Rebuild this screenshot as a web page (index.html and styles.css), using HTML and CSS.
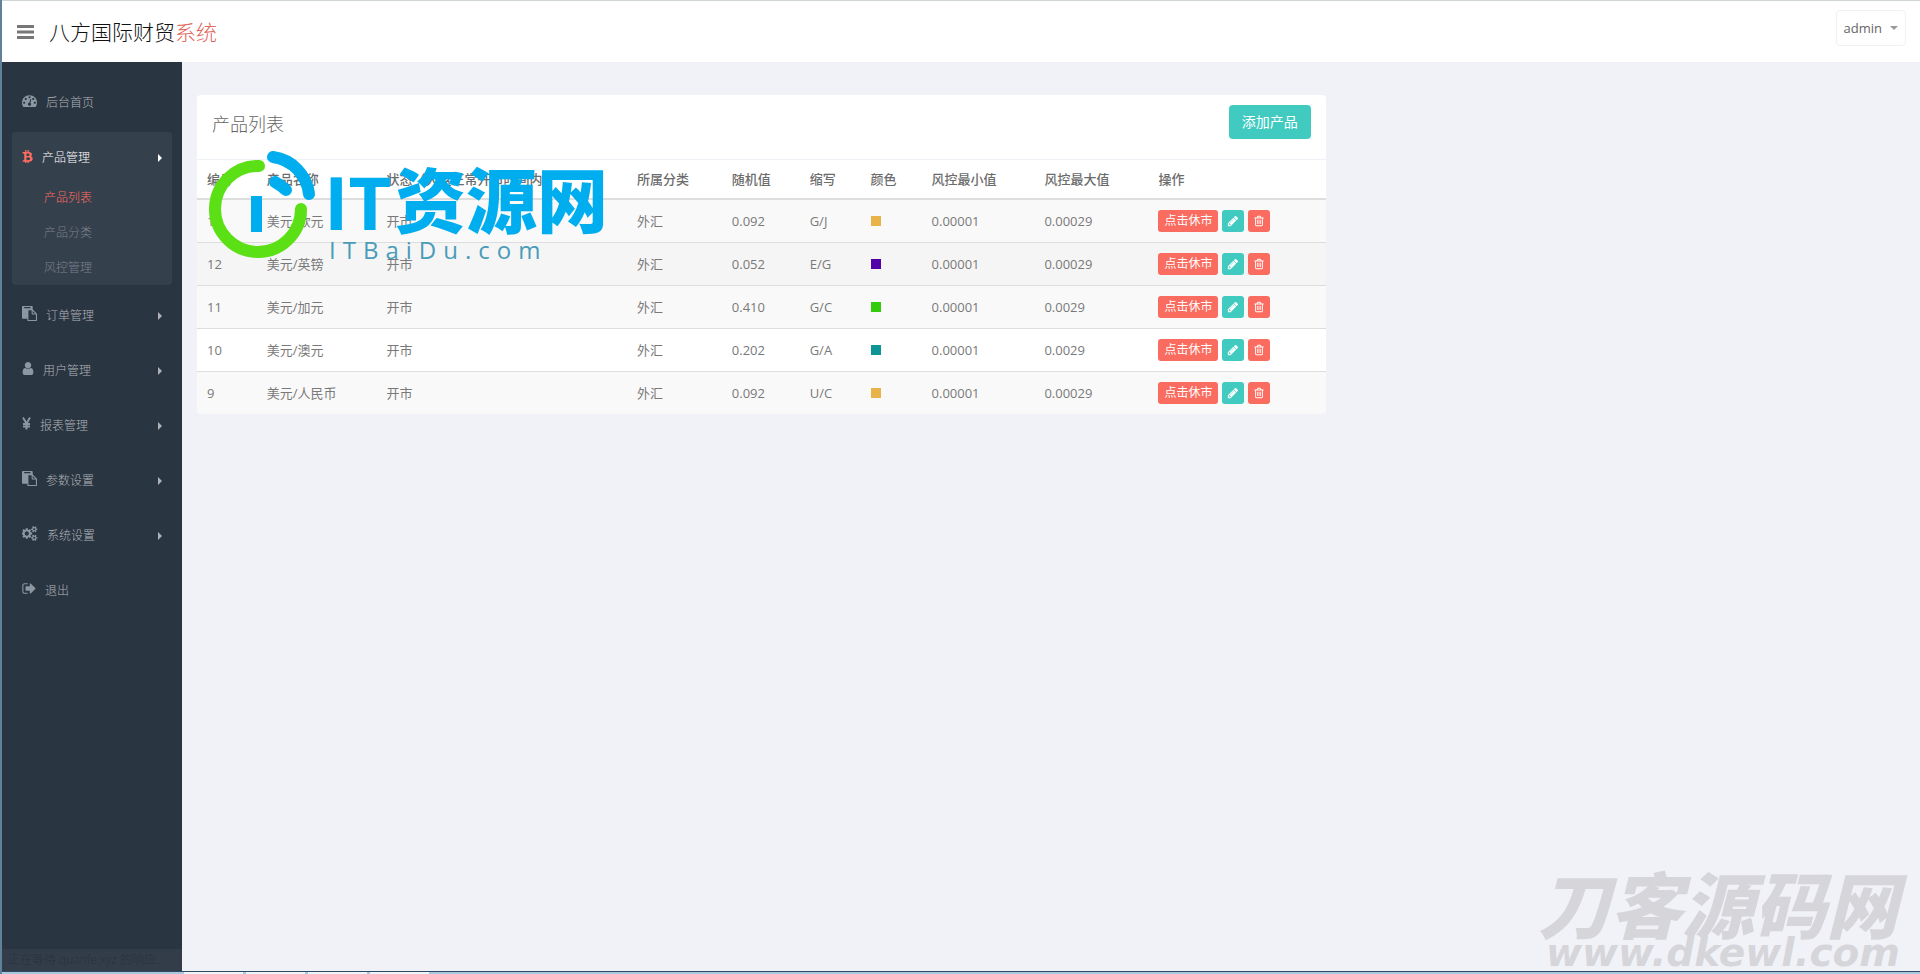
FILE: index.html
```html
<!DOCTYPE html>
<html lang="zh-CN">
<head>
<meta charset="utf-8">
<title>八方国际财贸系统</title>
<link rel="stylesheet" href="styles.css">
</head>
<body>
<svg class="sprite" aria-hidden="true">
  <symbol id="i-dash" viewBox="0 0 1792 1792"><path d="M384 1152q0-53-37.5-90.5t-90.5-37.5-90.5 37.5-37.5 90.5 37.5 90.5 90.5 37.5 90.5-37.5 37.5-90.5zm192-448q0-53-37.5-90.5t-90.5-37.5-90.5 37.5-37.5 90.5 37.5 90.5 90.5 37.5 90.5-37.5 37.5-90.5zm428 481l101-382q6-26-7.5-48.5t-38.5-29.5-48 6.5-30 39.5l-101 382q-60 5-107 43.5t-63 98.5q-20 77 20 146t117 89 146-20 89-117q16-60-6-117t-72-91zm660-33q0-53-37.5-90.5t-90.5-37.5-90.5 37.5-37.5 90.5 37.5 90.5 90.5 37.5 90.5-37.5 37.5-90.5zm-640-640q0-53-37.5-90.5t-90.5-37.5-90.5 37.5-37.5 90.5 37.5 90.5 90.5 37.5 90.5-37.5 37.5-90.5zm448 192q0-53-37.5-90.5t-90.5-37.5-90.5 37.5-37.5 90.5 37.5 90.5 90.5 37.5 90.5-37.5 37.5-90.5zm320 448q0 261-141 483-19 29-54 29h-1402q-35 0-54-29-141-221-141-483 0-182 71-348t191-286 286-191 348-71 348 71 286 191 191 286 71 348z"/></symbol>
  <symbol id="i-btc" viewBox="200 0 1280 1792"><path d="M1365 739q18 182-131 258 117 28 175 103t45 214q-7 71-32.5 125t-64.5 89-97 58.5-121.5 34.5-145.5 15v255h-154v-251q-80 0-122-1v252h-154v-255q-18 0-54-.5t-55-.5h-200l31-183h111q50 0 58-51v-402h16q-6-1-16-1v-287q-13-68-89-68h-111v-164l212 1q64 0 97-1v-252h154v247q82-2 122-2v-245h154v252q79 7 140 22.5t113 45 82.5 78 36.5 114.5zm-215 545q0-36-15-64t-37-46-57.5-30.5-65.5-18.5-74-9-69-3-64.5 1-47.5 1v338q8 0 37 .5t48 .5 53-1.5 58.5-4 57-8.5 55.5-14 47.5-21 39.5-30 24.5-40 9.5-51zm-71-476q0-33-12.5-58.5t-30.5-42-48-28-55-16.5-61.5-8-58-2.5-54 1-39.5.5v307q5 0 34.5.5t46.5 0 50-2 55-5.5 51.5-11 48.5-18.5 37-27 27-38.5 9-51z"/></symbol>
  <symbol id="i-paste" viewBox="0 0 1792 1792"><path d="M768 1664h896v-640h-416q-40 0-68-28t-28-68v-416h-384v1152zm256-1440v-64q0-13-9.5-22.5t-22.5-9.5h-704q-13 0-22.5 9.5t-9.5 22.5v64q0 13 9.5 22.5t22.5 9.5h704q13 0 22.5-9.5t9.5-22.5zm256 672h299l-299-299v299zm512 128v672q0 40-28 68t-68 28h-960q-40 0-68-28t-28-68v-160h-544q-40 0-68-28t-28-68v-1344q0-40 28-68t68-28h1088q40 0 68 28t28 68v328q21 13 36 28l408 408q28 28 48 76t20 88z"/></symbol>
  <symbol id="i-user" viewBox="256 0 1280 1792"><path d="M1536 1399q0 109-62.5 187t-150.5 78h-854q-88 0-150.5-78t-62.5-187q0-85 8.5-160.5t31.5-152 58.5-131 94-89 134.5-34.5q131 128 313 128t313-128q76 0 134.5 34.5t94 89 58.5 131 31.5 152 8.5 160.5zm-256-887q0 159-112.5 271.5t-271.5 112.5-271.5-112.5-112.5-271.5 112.5-271.5 271.5-112.5 271.5 112.5 112.5 271.5z"/></symbol>
  <symbol id="i-yen" viewBox="0 0 9 15"><path d="M1 1.5l3.5 6 3.5-6M4.500 7.500v6M1 8h7M1 10.500h7" fill="none" stroke="currentColor" stroke-width="1.900"/></symbol>
  <symbol id="i-cogs" viewBox="0 0 1920 1792"><path d="M832 896q0-106-75-181t-181-75-181 75-75 181 75 181 181 75 181-75 75-181zm768 512q0-52-38-90t-90-38-90 38-38 90q0 53 37.5 90.5t90.5 37.5 90.5-37.5 37.5-90.5zm0-1024q0-52-38-90t-90-38-90 38-38 90q0 53 37.5 90.5t90.5 37.5 90.5-37.5 37.5-90.5zm-384 421v185q0 10-7 19.5t-16 10.5l-155 24q-11 35-32 76 34 48 90 115 7 11 7 20 0 12-7 19-23 30-82.5 89.5t-78.5 59.5q-11 0-21-7l-115-90q-37 19-77 31-11 108-23 155-7 24-30 24h-186q-11 0-20-7.5t-10-17.5l-23-153q-34-10-75-31l-118 89q-7 7-20 7-11 0-21-8-144-133-144-160 0-9 7-19 10-14 41-53t47-61q-23-44-35-82l-152-24q-10-1-17-9.5t-7-19.500v-185q0-10 7-19.500t16-10.500l155-24q11-35 32-76-34-48-90-115-7-11-7-20 0-12 7-20 22-30 82-89t79-59q11 0 21 7l115 90q34-18 77-32 11-108 23-154 7-24 30-24h186q11 0 20 7.500t10 17.500l23 153q34 10 75 31l118-89q8-7 20-7 11 0 21 8 144 133 144 160 0 8-7 19-12 16-42 54t-45 60q23 48 34 82l152 23q10 2 17 10.500t7 19.500zm640 533v140q0 16-149 31-12 27-30 52 51 113 51 138 0 4-4 7-122 71-124 71-8 0-46-47t-52-68q-20 2-30 2t-30-2q-14 21-52 68t-46 47q-2 0-124-71-4-3-4-7 0-25 51-138-18-25-30-52-149-15-149-31v-140q0-16 149-31 13-29 30-52-51-113-51-138 0-4 4-7 4-2 35-20t59-34 30-16q8 0 46 46.500t52 67.500q20-2 30-2t30 2q51-71 92-112l6-2q4 0 124 70 4 3 4 7 0 25-51 138 17 23 30 52 149 15 149 31zm0-1024v140q0 16-149 31-12 27-30 52 51 113 51 138 0 4-4 7-122 71-124 71-8 0-46-47t-52-68q-20 2-30 2t-30-2q-14 21-52 68t-46 47q-2 0-124-71-4-3-4-7 0-25 51-138-18-25-30-52-149-15-149-31v-140q0-16 149-31 13-29 30-52-51-113-51-138 0-4 4-7 4-2 35-20t59-34 30-16q8 0 46 46.500t52 67.500q20-2 30-2t30 2q51-71 92-112l6-2q4 0 124 70 4 3 4 7 0 25-51 138 17 23 30 52 149 15 149 31z"/></symbol>
  <symbol id="i-out" viewBox="64 0 1600 1792"><path d="M704 1440q0 4 1 20t.5 26.500-3 23.500-10 19.500-20.500 6.500h-320q-119 0-203.500-84.500t-84.500-203.500v-704q0-119 84.500-203.500t203.500-84.500h320q13 0 22.500 9.500t9.500 22.500q0 4 1 20t.5 26.500-3 23.500-10 19.500-20.500 6.500h-320q-66 0-113 47t-47 113v704q0 66 47 113t113 47h312l11.500 1 11.500 3 8 5.500 7 9 2 13.500zm928-544q0 26-19 45l-544 544q-19 19-45 19t-45-19-19-45v-288h-448q-26 0-45-19t-19-45v-384q0-26 19-45t45-19h448v-288q0-26 19-45t45-19 45 19l544 544q19 19 19 45z"/></symbol>
  <symbol id="i-pencil" viewBox="0 0 1792 1792"><path d="M491 1536l91-91-235-235-91 91v107h128v128h107zm523-928q0-22-22-22-10 0-17 7l-542 542q-7 7-7 17 0 22 22 22 10 0 17-7l542-542q7-7 7-17zm-54-192l416 416-832 832h-416v-416zm683 96q0 53-37 90l-166 166-416-416 166-165q36-38 90-38 53 0 91 38l235 234q37 39 37 91z"/></symbol>
  <symbol id="i-trash" viewBox="192 0 1408 1792"><path d="M704 736v576q0 14-9 23t-23 9h-64q-14 0-23-9t-9-23v-576q0-14 9-23t23-9h64q14 0 23 9t9 23zm256 0v576q0 14-9 23t-23 9h-64q-14 0-23-9t-9-23v-576q0-14 9-23t23-9h64q14 0 23 9t9 23zm256 0v576q0 14-9 23t-23 9h-64q-14 0-23-9t-9-23v-576q0-14 9-23t23-9h64q14 0 23 9t9 23zm128 724v-948h-896v948q0 22 7 40.500t14.500 27 10.500 8.500h832q3 0 10.500-8.500t14.500-27 7-40.500zm-672-1076h448l-48-117q-7-9-17-11h-317q-10 2-17 11zm928 32v64q0 14-9 23t-23 9h-96v948q0 83-47 143.500t-113 60.500h-832q-66 0-113-58.500t-47-141.500v-952h-96q-14 0-23-9t-9-23v-64q0-14 9-23t23-9h309l70-167q15-37 54-63t79-26h320q40 0 79 26t54 63l70 167h309q14 0 23 9t9 23z"/></symbol>
</svg>
<div class="app">
  <header class="topbar">
    <button class="menu-toggle" type="button" aria-label="菜单"><svg width="17" height="14" viewBox="0 0 17 14"><path d="M0 0h17v3H0zM0 5.500h17v3H0zM0 11h17v3H0z"/></svg></button>
    <a class="brand" href="#">八方国际财贸<span>系统</span></a>
    <button class="account" type="button">admin<i class="caret"></i></button>
  </header>
  <div class="body">
    <nav class="sidebar">
      <ul class="menu">
        <li><a href="#"><svg class="ic" width="15" height="15"><use href="#i-dash"/></svg>后台首页</a></li>
        <li class="open"><a href="#"><svg class="ic" width="11" height="15"><use href="#i-btc"/></svg>产品管理<i class="arrow"></i></a>
          <ul class="sub">
            <li><a class="current" href="#">产品列表</a></li>
            <li><a href="#">产品分类</a></li>
            <li><a href="#">风控管理</a></li>
          </ul>
        </li>
        <li><a href="#"><svg class="ic" width="15" height="15"><use href="#i-paste"/></svg>订单管理<i class="arrow"></i></a></li>
        <li><a href="#"><svg class="ic" width="12" height="15"><use href="#i-user"/></svg>用户管理<i class="arrow"></i></a></li>
        <li><a href="#"><svg class="ic" width="9" height="15"><use href="#i-yen"/></svg>报表管理<i class="arrow"></i></a></li>
        <li><a href="#"><svg class="ic" width="15" height="15"><use href="#i-paste"/></svg>参数设置<i class="arrow"></i></a></li>
        <li><a href="#"><svg class="ic" width="16" height="15"><use href="#i-cogs"/></svg>系统设置<i class="arrow"></i></a></li>
        <li><a href="#"><svg class="ic" width="14" height="15"><use href="#i-out"/></svg>退出</a></li>
      </ul>
      <div class="status">正在等待 quanfe.xyz 的响应...</div>
    </nav>
    <main class="content">
      <section class="panel">
        <div class="panel-head"><h1>产品列表</h1><button class="add" type="button">添加产品</button></div>
        <table>
          <colgroup><col class="c-id"><col class="c-name"><col class="c-state"><col class="c-cat"><col class="c-rand"><col class="c-abbr"><col class="c-color"><col class="c-min"><col class="c-max"><col></colgroup>
          <thead><tr><th>编号</th><th>产品名称</th><th>状态（大盘正常开市时间内）</th><th>所属分类</th><th>随机值</th><th>缩写</th><th>颜色</th><th>风控最小值</th><th>风控最大值</th><th>操作</th></tr></thead>
          <tbody>
            <tr><td>13</td><td>美元/欧元</td><td>开市</td><td>外汇</td><td>0.092</td><td>G/J</td><td><i class="swatch gold"></i></td><td>0.00001</td><td>0.00029</td><td><div class="acts"><button class="b red" type="button">点击休市</button><button class="b teal" type="button" aria-label="编辑"><svg width="12" height="12"><use href="#i-pencil"/></svg></button><button class="b red" type="button" aria-label="删除"><svg width="10" height="12"><use href="#i-trash"/></svg></button></div></td></tr>
            <tr class="hover"><td>12</td><td>美元/英镑</td><td>开市</td><td>外汇</td><td>0.052</td><td>E/G</td><td><i class="swatch purple"></i></td><td>0.00001</td><td>0.00029</td><td><div class="acts"><button class="b red" type="button">点击休市</button><button class="b teal" type="button" aria-label="编辑"><svg width="12" height="12"><use href="#i-pencil"/></svg></button><button class="b red" type="button" aria-label="删除"><svg width="10" height="12"><use href="#i-trash"/></svg></button></div></td></tr>
            <tr><td>11</td><td>美元/加元</td><td>开市</td><td>外汇</td><td>0.410</td><td>G/C</td><td><i class="swatch green"></i></td><td>0.00001</td><td>0.0029</td><td><div class="acts"><button class="b red" type="button">点击休市</button><button class="b teal" type="button" aria-label="编辑"><svg width="12" height="12"><use href="#i-pencil"/></svg></button><button class="b red" type="button" aria-label="删除"><svg width="10" height="12"><use href="#i-trash"/></svg></button></div></td></tr>
            <tr><td>10</td><td>美元/澳元</td><td>开市</td><td>外汇</td><td>0.202</td><td>G/A</td><td><i class="swatch cyan"></i></td><td>0.00001</td><td>0.0029</td><td><div class="acts"><button class="b red" type="button">点击休市</button><button class="b teal" type="button" aria-label="编辑"><svg width="12" height="12"><use href="#i-pencil"/></svg></button><button class="b red" type="button" aria-label="删除"><svg width="10" height="12"><use href="#i-trash"/></svg></button></div></td></tr>
            <tr><td>9</td><td>美元/人民币</td><td>开市</td><td>外汇</td><td>0.092</td><td>U/C</td><td><i class="swatch gold"></i></td><td>0.00001</td><td>0.00029</td><td><div class="acts"><button class="b red" type="button">点击休市</button><button class="b teal" type="button" aria-label="编辑"><svg width="12" height="12"><use href="#i-pencil"/></svg></button><button class="b red" type="button" aria-label="删除"><svg width="10" height="12"><use href="#i-trash"/></svg></button></div></td></tr>
          </tbody>
        </table>
      </section>
    </main>
  </div>
  <footer class="taskbar"><i></i><i></i><i></i><i></i></footer>
</div>
<svg class="mark-a" width="440" height="140" viewBox="0 0 440 140">
  <g fill="none" stroke-linecap="round" stroke-width="12">
    <path stroke="#5be015" d="M55 20A43 43 0 1 0 97 63"/>
    <path stroke="#00aeef" d="M69 11A42 42 0 0 1 105 48M71 36Q78 40 82 44"/>
  </g>
  <path fill="#00aeef" d="M47 50h11v36H47z"/>
  <text class="mark-it" x="120" y="84">IT</text>
  <text class="mark-cn" x="191" y="81">资源网</text>
  <text class="mark-en" x="125" y="113">ITBaiDu.com</text>
</svg>
<div class="mark-b"><div class="mark-b-cn">刀客源码网</div><div class="mark-b-en">www.dkewl.com</div></div>
</body>
</html>
```
FILE: styles.css
```css
* { box-sizing: border-box; }
body { margin: 0; background: #f1f2f7; color: #797979; font: 300 13px/20px "Open Sans", "Noto Sans CJK SC", sans-serif; }
button { font: inherit; border: 0; padding: 0; cursor: pointer; }
a { text-decoration: none; color: inherit; }
ul { list-style: none; margin: 0; padding: 0; }
svg { fill: currentColor; }
.sprite { position: absolute; width: 0; height: 0; }

.app { display: flex; flex-direction: column; min-height: 100vh; border-left: 2px solid #5f8199; }
.topbar { display: flex; align-items: center; height: 62px; padding: 0 14px 0 15px; background: #fff; border-top: 1px solid #cfd5d6; }
.menu-toggle { display: flex; background: none; color: #777; }
.brand { margin-left: 15px; font-size: 21px; line-height: 30px; color: #111; }
.brand span { color: #e0665a; }
.account { display: flex; align-items: center; gap: 8px; margin: 0 0 8px auto; height: 36px; padding: 0 7px; background: #fff; border: 1px solid #f1f1f4; border-radius: 4px; color: #666; font-weight: 400; }
.caret { border: 4px solid transparent; border-top-color: #999; border-bottom: 0; }

.body { display: flex; flex: 1; }
.sidebar { display: flex; flex-direction: column; flex: 0 0 180px; background: #2a3542; color: #aeb2b7; font-size: 12px; }
.menu { flex: 1; padding: 15px 10px 0; }
.menu > li { margin-bottom: 10px; border-radius: 4px; }
.menu > li > a { display: flex; align-items: center; gap: 9px; height: 45px; padding: 6px 10px 0; }
.ic { margin-bottom: 4px; }
.menu > li:not(.open) .ic { color: #8b97a1; }
.arrow { margin-left: auto; border: 4px solid transparent; border-left-color: currentColor; border-right: 0; }
.menu > .open { margin-bottom: 5px; background: #35404d; }
.open > a { color: #fff; }
.open .ic { color: #ff6c60; }
.sub { padding-top: 3px; }
.sub a { display: block; height: 35px; padding: 8px 0 0 32px; line-height: 20px; color: #79818a; }
.sub .current { color: #ff6c60; }
.status { height: 22px; padding-left: 6px; background: #323d49; color: #27323e; line-height: 22px; overflow: hidden; white-space: nowrap; }

.content { flex: 1; display: grid; grid-template-columns: repeat(12, 1fr); column-gap: 30px; align-content: start; padding: 33px 15px 0; }
.panel { grid-column: span 8; background: #fff; border-radius: 4px; overflow: hidden; }
.panel-head { display: flex; justify-content: space-between; align-items: flex-start; height: 65px; padding: 10px 15px; border-bottom: 1px solid #eff2f7; }
h1 { margin: 5px 0 0; font-size: 18px; line-height: 28px; font-weight: 300; color: #666; }
.add { height: 34px; padding: 0 13px; border-radius: 4px; background: #41cac0; color: #fff; font-size: 14px; font-weight: 400; }
table { width: 100%; table-layout: fixed; border-collapse: collapse; }
.c-id { width: 5.3%; } .c-name { width: 10.6%; } .c-state { width: 22.2%; } .c-cat { width: 8.4%; } .c-rand { width: 6.9%; }
.c-abbr { width: 5.4%; } .c-color { width: 5.4%; } .c-min { width: 10%; } .c-max { width: 10.1%; }
th { height: 39px; padding: 0 10px; text-align: left; font-weight: 500; white-space: nowrap; border-bottom: 2px solid #ddd; color: #6c6c6c; }
td { height: 43px; padding: 0 10px; border-top: 1px solid #ddd; font-weight: 400; }
tbody tr:nth-child(odd) { background: #f9f9f9; }
tbody .hover { background: #f5f5f5; }
.swatch { display: block; width: 10px; height: 10px; }
.gold { background: #e8b44a; } .purple { background: #5200a8; } .green { background: #33cc0d; } .cyan { background: #0d9494; }
.acts { display: flex; gap: 4px; }
.b { display: flex; align-items: center; height: 22px; padding: 0 6px; border-radius: 3px; color: #fff; font-size: 12px; white-space: nowrap; }
.teal.b { padding: 0 5px; }
.red { background: #fa6c60; } .teal { background: #41cac0; }

.taskbar { display: flex; gap: 3px; height: 3px; padding-left: 182px; background: #a9c8df; border-top: 1px solid #2d4a62; }
.taskbar i { width: 59px; background: #eef5fa; }

.mark-a { position: absolute; left: 204px; top: 146px; pointer-events: none; }
.mark-a text { fill: #00aeef; }
.mark-it { font: 700 74px "Open Sans", sans-serif; }
.mark-cn { font: 900 71px "Noto Sans CJK SC", sans-serif; }
.mark-a .mark-en { font: 400 24px "Open Sans", sans-serif; letter-spacing: 7px; fill: #4a9cba; }
.mark-b { position: absolute; right: 20px; bottom: 2px; color: #d5d5da; pointer-events: none; white-space: nowrap; }
.mark-b-cn { font: italic 900 72px/64px "Noto Sans CJK SC", sans-serif; }
.mark-b-en { padding-left: 8px; font: italic 700 39px/38px "DejaVu Sans", sans-serif; }
```
